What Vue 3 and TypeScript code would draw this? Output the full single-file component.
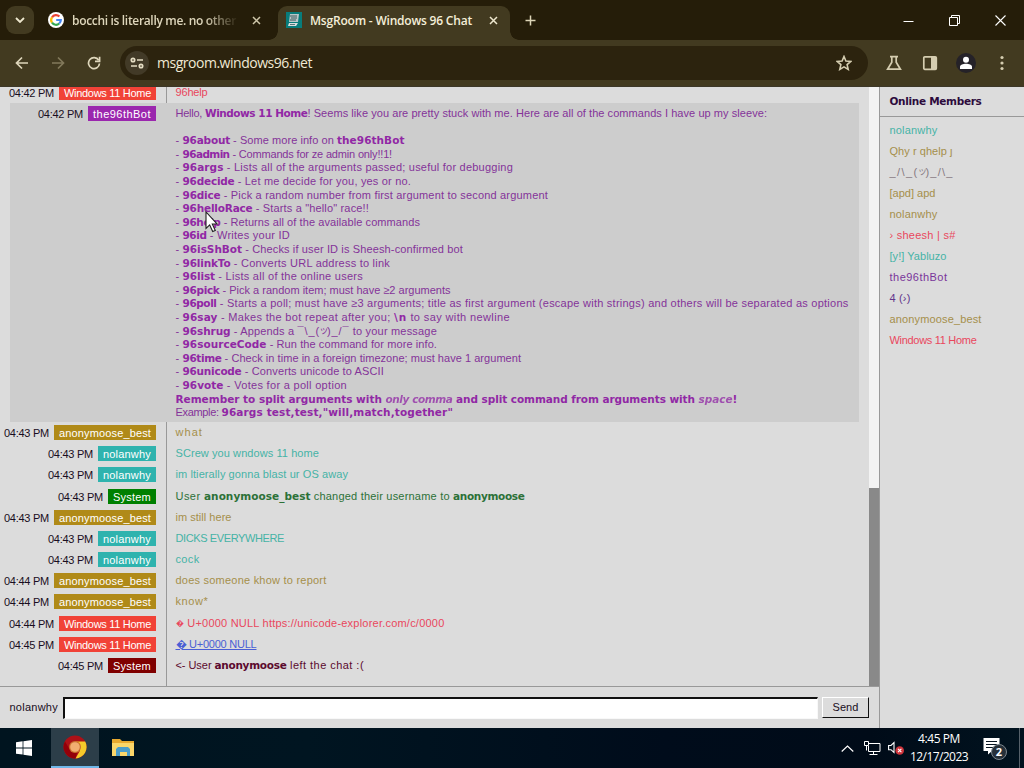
<script setup lang="ts">
import type { Directive } from 'vue'

type Kind = '' | 'b' | 'i' | 'tiny' | 'link'
interface Run { t: string; w: number; k: Kind }
interface Message { time: string; who: string; tone: string; bw: number; runs: Run[] }

// Adjusts tracking so that a run of text occupies the given width.
const vFit: Directive<HTMLElement, number> = {
  mounted(el, binding) {
    const n = Array.from(el.textContent || '').length
    const natural = el.getBoundingClientRect().width
    if (n) el.style.letterSpacing = (binding.value - natural) / n + 'px'
  },
}

// Each part is [text, right edge, kind]; widths follow from successive edges.
function line(...parts: [string, number, Kind?][]): Run[] {
  let x = 175.5
  return parts.map(([t, end, k]) => {
    const w = end - x
    x = end
    return { t, w, k: k || '' }
  })
}
const cmd = (name: string, be: number, desc: string, end: number, ...more: [string, number, Kind?][]) =>
  line(['- ', 182.5], ['96' + name, be, 'b'], [' - ' + desc, end], ...more)

const help: Run[][] = [
  line(['Hello, ', 205], ['Windows 11 Home', 307.5, 'b'], ['! Seems like you are pretty stuck with me. Here are all of the commands I have up my sleeve:', 767]),
  [],
  cmd('about', 230, 'Some more info on ', 337, ['the96thBot', 404.5, 'b']),
  cmd('admin', 229.5, 'Commands for ze admin only!!1!', 392),
  cmd('args', 223.5, 'Lists all of the arguments passed; useful for debugging', 513),
  cmd('decide', 234.5, 'Let me decide for you, yes or no.', 411),
  cmd('dice', 220.5, 'Pick a random number from first argument to second argument', 548),
  cmd('helloRace', 252.5, 'Starts a "hello" race!!', 369),
  cmd('help', 220.5, 'Returns all of the available commands', 420),
  cmd('id', 206.5, 'Writes your ID', 290),
  cmd('isShBot', 242, 'Checks if user ID is Sheesh-confirmed bot', 463),
  cmd('linkTo', 230.5, 'Converts URL address to link', 390),
  cmd('list', 215, 'Lists all of the online users', 363),
  cmd('pick', 219.5, 'Pick a random item; must have ≥2 arguments', 450.5),
  cmd('poll', 216.5, 'Starts a poll; must have ≥3 arguments; title as first argument (escape with strings) and others will be separated as options', 848.5),
  cmd('say', 217.5, 'Makes the bot repeat after you; ', 394, ['\\n', 407, 'b'], [' to say with newline', 510]),
  cmd('shrug', 230.5, 'Appends a ', 297.5, ['¯\\_(', 320], ['ツ', 327, 'tiny'], [')_/¯', 349.5], [' to your message', 437]),
  cmd('sourceCode', 266.5, 'Run the command for more info.', 437),
  cmd('time', 221.5, 'Check in time in a foreign timezone; must have 1 argument', 521),
  cmd('unicode', 241.5, 'Converts unicode to ASCII', 384),
  cmd('vote', 223.5, 'Votes for a poll option', 347),
  line(['Remember to split arguments with ', 385.5, 'b'], ['only comma', 452.5, 'i'], [' and split command from arguments with ', 698.5, 'b'], ['space', 732.5, 'i'], ['!', 736, 'b']),
  line(['Example: ', 221.5], ['96args test,test,"will,match,together"', 453, 'b']),
]

const anon = { who: 'anonymoose_best', tone: 'gold', bw: 92 }
const nolan = { who: 'nolanwhy', tone: 'teal', bw: 48 }
const win = { who: 'Windows 11 Home', tone: 'red', bw: 87 }
const messages: Message[] = [
  { time: '04:43 PM', ...anon, runs: line(['what', 203]) },
  { time: '04:43 PM', ...nolan, runs: line(['SCrew you wndows 11 home', 319]) },
  { time: '04:43 PM', ...nolan, runs: line(['im ltierally gonna blast ur OS away', 348]) },
  { time: '04:43 PM', who: 'System', tone: 'green', bw: 38, runs: line(['User ', 204], ['anonymoose_best', 310.5, 'b'], [' changed their username to ', 453], ['anonymoose', 524.5, 'b']) },
  { time: '04:43 PM', ...anon, runs: line(['im still here', 231.5]) },
  { time: '04:43 PM', ...nolan, runs: line(['DICKS EVERYWHERE', 284]) },
  { time: '04:43 PM', ...nolan, runs: line(['cock', 199.5]) },
  { time: '04:44 PM', ...anon, runs: line(['does someone khow to report', 326.5]) },
  { time: '04:44 PM', ...anon, runs: line(['know*', 208.5]) },
  { time: '04:44 PM', ...win, runs: line(['\uFFFD', 184, 'tiny'], [' U+0000 NULL https://unicode-explorer.com/c/0000', 444.5]) },
  { time: '04:45 PM', ...win, runs: line(['\uFFFD U+0000 NULL', 256.5, 'link']) },
  { time: '04:45 PM', who: 'System', tone: 'maroon', bw: 38, runs: line(['<- User ', 214.5], ['anonymoose', 286.5, 'b'], [' left the chat :(', 364]) },
]

const members: { runs: Run[]; tone: string }[] = [
  { tone: 'teal', runs: [{ t: 'nolanwhy', w: 48, k: '' }] },
  { tone: 'gold', runs: [{ t: 'Qhy r qhelp ȷ', w: 63, k: '' }] },
  { tone: 'grey', runs: [{ t: '_/\\_(', w: 29, k: '' }, { t: 'ツ', w: 7, k: 'tiny' }, { t: ')_/\\_', w: 28, k: '' }] },
  { tone: 'gold', runs: [{ t: '[apd] apd', w: 46, k: '' }] },
  { tone: 'gold', runs: [{ t: 'nolanwhy', w: 48, k: '' }] },
  { tone: 'red', runs: [{ t: '› sheesh | s#', w: 66, k: '' }] },
  { tone: 'teal', runs: [{ t: '[y!] Yabluzo', w: 57, k: '' }] },
  { tone: 'bot', runs: [{ t: 'the96thBot', w: 58, k: '' }] },
  { tone: 'violet', runs: [{ t: '4 (›)', w: 21, k: '' }] },
  { tone: 'gold', runs: [{ t: 'anonymoose_best', w: 92, k: '' }] },
  { tone: 'red', runs: [{ t: 'Windows 11 Home', w: 87, k: '' }] },
]
</script>

<template>
  <div class="screen">
    <header class="tabs">
      <div class="tab-search"><svg width="10" height="6" viewBox="0 0 10 6"><path d="M1 1l4 4 4-4" fill="none" stroke="#eee8cf" stroke-width="1.8" /></svg></div>
      <div class="tab idle">
        <svg class="google" width="16" height="16" viewBox="0 0 16 16">
          <circle cx="8" cy="8" r="8" fill="#fff" />
          <g fill="none" stroke-width="2.2"><path d="M4 5.3A4.8 4.8 0 0 1 11.4 4.6" stroke="#ea4335" /><path d="M4 5.3A4.8 4.8 0 0 0 4 10.7" stroke="#fbbc05" /><path d="M4 10.7A4.8 4.8 0 0 0 11.2 11.5" stroke="#34a853" /><path d="M8.2 8H12.8A4.8 4.8 0 0 1 11.2 11.5" stroke="#4285f4" /></g>
        </svg>
        <span class="title faded"><span v-fit="164" class="run">bocchi is literally me. no other</span></span>
        <svg class="close" width="9" height="9" viewBox="0 0 9 9"><path d="M1 1l7 7M8 1L1 8" stroke="#cfc7aa" stroke-width="1.5" /></svg>
      </div>
      <div class="tab active">
        <svg class="fav" width="16" height="16" viewBox="0 0 16 16"><rect width="16" height="16" fill="#087c7b" /><path d="M4 2h9l-1 8H3z" fill="#b9c6c8" /><path d="M4 4h7M5 6h6M4 8h6" stroke="#3a5a5c" /><path d="M3 11h9l-2 3H2z" fill="#d9dfdf" /><path d="M4 12.5h5" stroke="#58777a" /></svg>
        <span class="title"><span v-fit="162" class="run">MsgRoom - Windows 96 Chat</span></span>
        <svg class="close" width="9" height="9" viewBox="0 0 9 9"><path d="M1 1l7 7M8 1L1 8" stroke="#eee8cf" stroke-width="1.5" /></svg>
      </div>
      <svg class="plus" width="11" height="11" viewBox="0 0 11 11"><path d="M5.5 .5v10M.5 5.5h10" stroke="#ddd5b8" stroke-width="1.5" /></svg>
      <div class="win">
        <svg width="11" height="11" viewBox="0 0 11 11"><path d="M.5 6.500h10" stroke="#fff" /></svg>
        <svg width="11" height="11" viewBox="0 0 11 11"><path d="M.5 2.500h8v8h-8zM2.500 2.500v-2h8v8h-2" fill="none" stroke="#fff" /></svg>
        <svg width="11" height="11" viewBox="0 0 11 11"><path d="M.5 .5l10 10M10.500 .5l-10 10" stroke="#fff" stroke-width="1.1" /></svg>
      </div>
    </header>

    <div class="toolbar">
      <svg class="nav" width="14" height="14" viewBox="0 0 14 14"><path d="M13 7H2M7 1.500L1.500 7 7 12.500" fill="none" stroke="#ded6bb" stroke-width="1.700" /></svg>
      <svg class="nav" width="14" height="14" viewBox="0 0 14 14"><path d="M1 7h11M7 1.500L12.500 7 7 12.500" fill="none" stroke="#82795b" stroke-width="1.700" /></svg>
      <svg class="nav" width="14" height="14" viewBox="0 0 14 14"><path d="M11.700 4.200A5.500 5.500 0 1 0 12.500 7.500" fill="none" stroke="#ded6bb" stroke-width="1.700" /><path d="M12.600 .8v4.500H8" fill="none" stroke="#ded6bb" stroke-width="1.700" /></svg>
      <div class="omnibox">
        <div class="site"><svg width="14" height="12" viewBox="0 0 14 12" fill="none" stroke="#e5ddc3" stroke-width="1.700"><circle cx="3" cy="3" r="1.700" /><path d="M7 3h6M1 9h6" /><circle cx="11" cy="9" r="1.700" /></svg></div>
        <span v-fit="155" class="run url">msgroom.windows96.net</span>
        <svg class="star" width="16" height="16" viewBox="0 0 16 16"><path d="M8 1.500l1.900 4.500 4.900.4-3.700 3.200 1.100 4.800L8 11.900l-4.200 2.500 1.100-4.800L1.200 6.400 6.100 6z" fill="none" stroke="#d5cdb0" stroke-width="1.600" /></svg>
      </div>
      <div class="actions">
        <svg width="16" height="16" viewBox="0 0 16 16"><path d="M4 1.700h8M5.800 2v5.200L1.600 14.200h12.800L10.200 7.200V2" fill="none" stroke="#d5cdb0" stroke-width="1.700" /></svg>
        <svg width="16" height="16" viewBox="0 0 16 16"><rect x="1.800" y="1.800" width="12.500" height="12.500" rx="1" fill="none" stroke="#d5cdb0" stroke-width="1.700" /><path d="M9 2h5v12H9z" fill="#d5cdb0" /></svg>
        <svg width="20" height="20" viewBox="0 0 20 20"><circle cx="10" cy="10" r="10" fill="#252228" /><circle cx="10" cy="6.800" r="3" fill="#fff" /><path d="M4 16v-2.200c0-4 12-4 12 0V16z" fill="#fff" /></svg>
        <svg width="4" height="16" viewBox="0 0 4 16" fill="#d5cdb0"><circle cx="2" cy="2.500" r="1.600" /><circle cx="2" cy="8" r="1.600" /><circle cx="2" cy="13.500" r="1.600" /></svg>
      </div>
    </div>

    <main class="page">
      <section class="chat">
        <div class="history">
          <div class="log">
            <div class="row">
              <div class="meta"><span v-fit="45" class="run">04:42 PM</span><span class="badge bg-red"><span v-fit="87" class="run">Windows 11 Home</span></span></div>
              <div class="body red"><span v-fit="32" class="run">96help</span></div>
            </div>
            <div class="row mention">
              <div class="meta"><span v-fit="45" class="run">04:42 PM</span><span class="badge bg-purple"><span v-fit="58" class="run">the96thBot</span></span></div>
              <div class="body purple">
                <div v-for="(l, i) in help" :key="i" class="line"><span v-for="(r, j) in l" :key="j" v-fit="r.w" class="run" :class="r.k">{{ r.t }}</span></div>
              </div>
            </div>
            <div v-for="(m, i) in messages" :key="i" class="row">
              <div class="meta"><span v-fit="45" class="run">{{ m.time }}</span><span class="badge" :class="'bg-' + m.tone"><span v-fit="m.bw" class="run">{{ m.who }}</span></span></div>
              <div class="body" :class="m.tone"><span v-for="(r, j) in m.runs" :key="j" v-fit="r.w" class="run" :class="r.k">{{ r.t }}</span></div>
            </div>
          </div>
          <div class="scroll"><div class="thumb"></div></div>
        </div>
        <div class="compose">
          <span v-fit="48.500" class="run">nolanwhy</span>
          <div class="field"></div>
          <div class="send"><span v-fit="26" class="run">Send</span></div>
        </div>
      </section>
      <aside class="members">
        <div class="heading"><span v-fit="92" class="run b">Online Members</span></div>
        <div v-for="(m, i) in members" :key="i" class="member" :class="m.tone"><span v-for="(r, j) in m.runs" :key="j" v-fit="r.w" class="run" :class="r.k">{{ r.t }}</span></div>
      </aside>
    </main>

    <footer class="taskbar">
      <div class="task"><svg width="16" height="16" viewBox="0 0 16 16" fill="#fff"><path d="M0 2.300l6.600-1v6.200H0zM7.400 1.200L16 0v7.500H7.400zM0 8.400h6.600v6.200L0 13.700zM7.400 8.400H16V16l-8.600-1.200z" /></svg></div>
      <div class="task current"><svg width="24" height="24" viewBox="0 0 24 24"><circle cx="12" cy="12" r="11.500" fill="#ad1117" /><path d="M12 6.500h10.200A11.500 11.500 0 0 1 12.500 23.500l4.500-8z" fill="#f5c92a" /><path d="M2 6.500A11.500 11.500 0 0 0 12.500 23.500L14 18 7 15z" fill="#930009" /><circle cx="12" cy="12" r="6" fill="#c9702f" /><circle cx="12" cy="12" r="4.800" fill="#f2ad71" /></svg></div>
      <div class="task"><svg width="22" height="20" viewBox="0 0 22 20"><path d="M0 1h8l2 2h12v15H0z" fill="#e8a92f" /><path d="M0 5h22v13H0z" fill="#fbd669" /><path d="M4 18v-7l2-2h10l2 2v7h-3v-4H8v4z" fill="#4c9dc9" /></svg></div>
      <div class="tray">
        <svg class="t-up" width="13" height="7" viewBox="0 0 13 7"><path d="M.7 6.500l5.800-5.500 5.800 5.500" fill="none" stroke="#fff" stroke-width="1.200" /></svg>
        <svg class="t-net" width="17" height="14" viewBox="0 0 17 14" fill="none" stroke="#fff"><path d="M5 2.500h11v8H4.500V5M9.500 10.500v3M5.500 13.500h8M.5 .5h4v4h-4zM2.500 4.500v5" /></svg>
        <svg class="t-vol" width="17" height="14" viewBox="0 0 17 14"><path d="M.6 4.500h2.400L6 1.500v10L3 8.700H.6z" fill="none" stroke="#fff" stroke-width="1.100" /><circle cx="11.700" cy="9.500" r="4.300" fill="#cf343b" /><path d="M10 7.800l3.400 3.400M13.400 7.800L10 11.200" stroke="#fff" stroke-width="1.100" /></svg>
        <div class="clock"><span v-fit="42" class="run">4:45 PM</span><span v-fit="58" class="run">12/17/2023</span></div>
        <div class="note">
          <svg width="17" height="17" viewBox="0 0 17 17"><path d="M.5 0h16v13H9l-4 3.500V13H.5z" fill="#fff" /><path d="M3 3.500h11M3 6.500h11M3 9.500h7" stroke="#071521" /></svg>
          <span class="count">2</span>
        </div>
        <div class="peek"></div>
      </div>
    </footer>

    <svg class="pointer" width="14" height="22" viewBox="0 0 14 22"><path d="M1 1v16.500l3.700-3.600 3 6.600 2.600-1.100-3-6.400H12z" fill="#fff" stroke="#222" stroke-width="1.100" /></svg>
  </div>
</template>

<style>
body { margin: 0; overflow: hidden; }
</style>

<style scoped>
* { box-sizing: border-box; }
svg { display: block; flex: none; }
.screen { position: relative; width: 1024px; height: 768px; display: flex; flex-direction: column; overflow: hidden; background: #dcdcdc; font: 11px/13.6px "Liberation Sans", "Noto Sans CJK JP", sans-serif; color: #190d22; }
.run { display: inline-block; white-space: pre; flex: none; }

.tabs { height: 40px; flex: none; background: #251d09; display: flex; align-items: center; }
.tab-search { width: 28px; height: 28px; margin-left: 6px; border-radius: 9px; background: #423a20; display: flex; align-items: center; justify-content: center; }
.tab { display: flex; align-items: center; font: 600 12px/20px "Open Sans", "Noto Sans", sans-serif; color: #ded6bb; }
.idle { width: 226px; margin-left: 14px; }
.title { margin-left: 8px; padding-top: 1px; display: block; width: 165px; overflow: hidden; white-space: nowrap; height: 21px; }
.faded { -webkit-mask-image: linear-gradient(90deg, #000 80%, transparent 101%); mask-image: linear-gradient(90deg, #000 80%, transparent 101%); }
.idle .close { margin-left: 15px; }
.active { position: relative; align-self: flex-end; width: 232px; height: 34px; margin-left: 4px; padding: 0 0 6px 8px; border-radius: 9px 9px 0 0; background: #423a20; color: #f4eed8; }
.active::before, .active::after { content: ""; position: absolute; bottom: 0; width: 9px; height: 9px; }
.active::before { left: -9px; background: radial-gradient(circle at 0 0, transparent 8.5px, #423a20 9px); }
.active::after { right: -9px; background: radial-gradient(circle at 100% 0, transparent 8.5px, #423a20 9px); }
.active .close { margin-left: 14px; }
.plus { margin-left: 15px; }
.win { margin-left: auto; display: flex; gap: 35px; padding-right: 18px; }

.toolbar { height: 47px; flex: none; background: #423a20; border-bottom: 1px solid #3c3728; display: flex; align-items: center; padding: 0 20px 0 15px; }
.nav { margin-right: 22px; }
.omnibox { width: 748px; height: 34px; margin-left: -3px; border-radius: 17px; background: #2c230e; display: flex; align-items: center; padding: 0 16px 0 5px; }
.site { width: 24px; height: 24px; border-radius: 12px; background: #423a27; display: flex; align-items: center; justify-content: center; }
.url { margin-left: 8px; font: 14px/22px "Open Sans", "Noto Sans", sans-serif; color: #f0e9d4; }
.star { margin-left: auto; }
.actions { display: flex; align-items: center; margin-left: 18px; gap: 20px; }
.actions svg:nth-child(3) { margin: 0 4px 0 -2px; }

.page { flex: 1; min-height: 0; display: flex; }
.chat { width: 879px; display: flex; flex-direction: column; }
.history { height: 599px; display: flex; }
.log { width: 869px; padding: 0 10px 9.8px 0; display: flex; flex-direction: column; justify-content: flex-end; overflow: hidden; }
.scroll { width: 10px; background: #f3f3f3; display: flex; align-items: flex-end; }
.thumb { width: 10px; height: 198px; background: #898989; }
.row { flex: none; height: 21.18px; display: flex; }
.log > .row:last-child { height: 31px; margin-bottom: -9.8px; }
.meta { width: 167px; border-right: 1px solid #999; padding: 3px 10px 0 0; display: flex; justify-content: flex-end; align-items: flex-start; line-height: 16px; }
.badge { display: flex; height: 15px; margin-left: 5px; padding: 0 5px; line-height: 16px; color: #fff; }
.body { flex: 1; padding: 4px 0 0 8.5px; display: flex; align-items: flex-start; white-space: nowrap; }
.mention { height: 319px; margin-left: 10px; background: #cdcdcd; }
.mention .meta { width: 157px; border-right-color: transparent; }
.mention .body { display: block; }
.line { height: 13.6px; display: flex; }
.b, .i { font-family: "DejaVu Sans", sans-serif; font-size: 10.5px; font-weight: 700; }
.i { font-style: italic; opacity: .75; }
.tiny { font-size: 8px; }
.link { color: #4a5fd5; text-decoration: underline; }
.bg-red { background: #f14237; }
.bg-purple { background: #9b27ae; }
.bg-gold { background: #b08a18; }
.bg-teal { background: #2fb3ae; }
.bg-green { background: #008000; }
.bg-maroon { background: #800000; }
.red { color: #e9475c; }
.purple { color: #843399; }
.purple .b, .purple .i { color: #9128a5; }
.gold { color: #a58f4b; }
.teal { color: #46b3a6; }
.green { color: #2c7138; }
.maroon { color: #5b0a2e; }
.grey { color: #857981; }
.bot { color: #79349a; }
.violet { color: #62358b; }

.compose { flex: 1; border-top: 1px solid #999; display: flex; align-items: center; padding: 0 10px 0 9.5px; }
.field { width: 755px; height: 22px; margin-left: 5px; background: #fff; border: 1px solid #f8f8f8; border-width: 2px 1px 1px 2px; border-top-color: #111; border-left-color: #111; }
.send { width: 47px; height: 21px; margin-left: 4px; border: 1px solid #fff; border-right-color: #111; border-bottom-color: #111; display: flex; align-items: center; justify-content: center; padding-top: 1px; }

.members { flex: 1; border-left: 1px solid #999; }
.heading { height: 30px; border-bottom: 1px solid #999; padding: 1px 0 0 9.5px; display: flex; align-items: center; color: #2d0b3c; margin-bottom: 3px; }
.member { height: 21px; padding: 1px 0 0 9.5px; display: flex; align-items: center; }

.taskbar { height: 40px; flex: none; display: flex; background: linear-gradient(90deg, #00141f 0, #001521 30%, #000c1b 65%, #000b18 85%, #01131f); color: #fff; }
.task { width: 48px; height: 40px; display: flex; align-items: center; justify-content: center; }
.task:first-child { width: 51px; padding-right: 3px; }
.current { background: #2c3e49; border-bottom: 2px solid #6fb7e9; }
.tray { margin-left: auto; display: flex; align-items: center; }
.t-up { margin-right: 10px; }
.t-net { margin-right: 7px; }
.clock { width: 60px; margin: 0 14px 0 4px; display: flex; flex-direction: column; align-items: center; font: 12px/18px "Open Sans", "Noto Sans", sans-serif; }
.note { position: relative; width: 24px; height: 24px; margin-right: 12px; padding-top: 2px; }
.count { position: absolute; left: 8px; top: 8px; width: 16px; height: 16px; border: 1px solid #7d878e; border-radius: 50%; background: #263039; text-align: center; font: 700 11px/14px "Open Sans", sans-serif; }
.peek { width: 5px; height: 40px; border-left: 1px solid #56616a; }
.pointer { position: absolute; left: 205px; top: 211px; }
</style>
